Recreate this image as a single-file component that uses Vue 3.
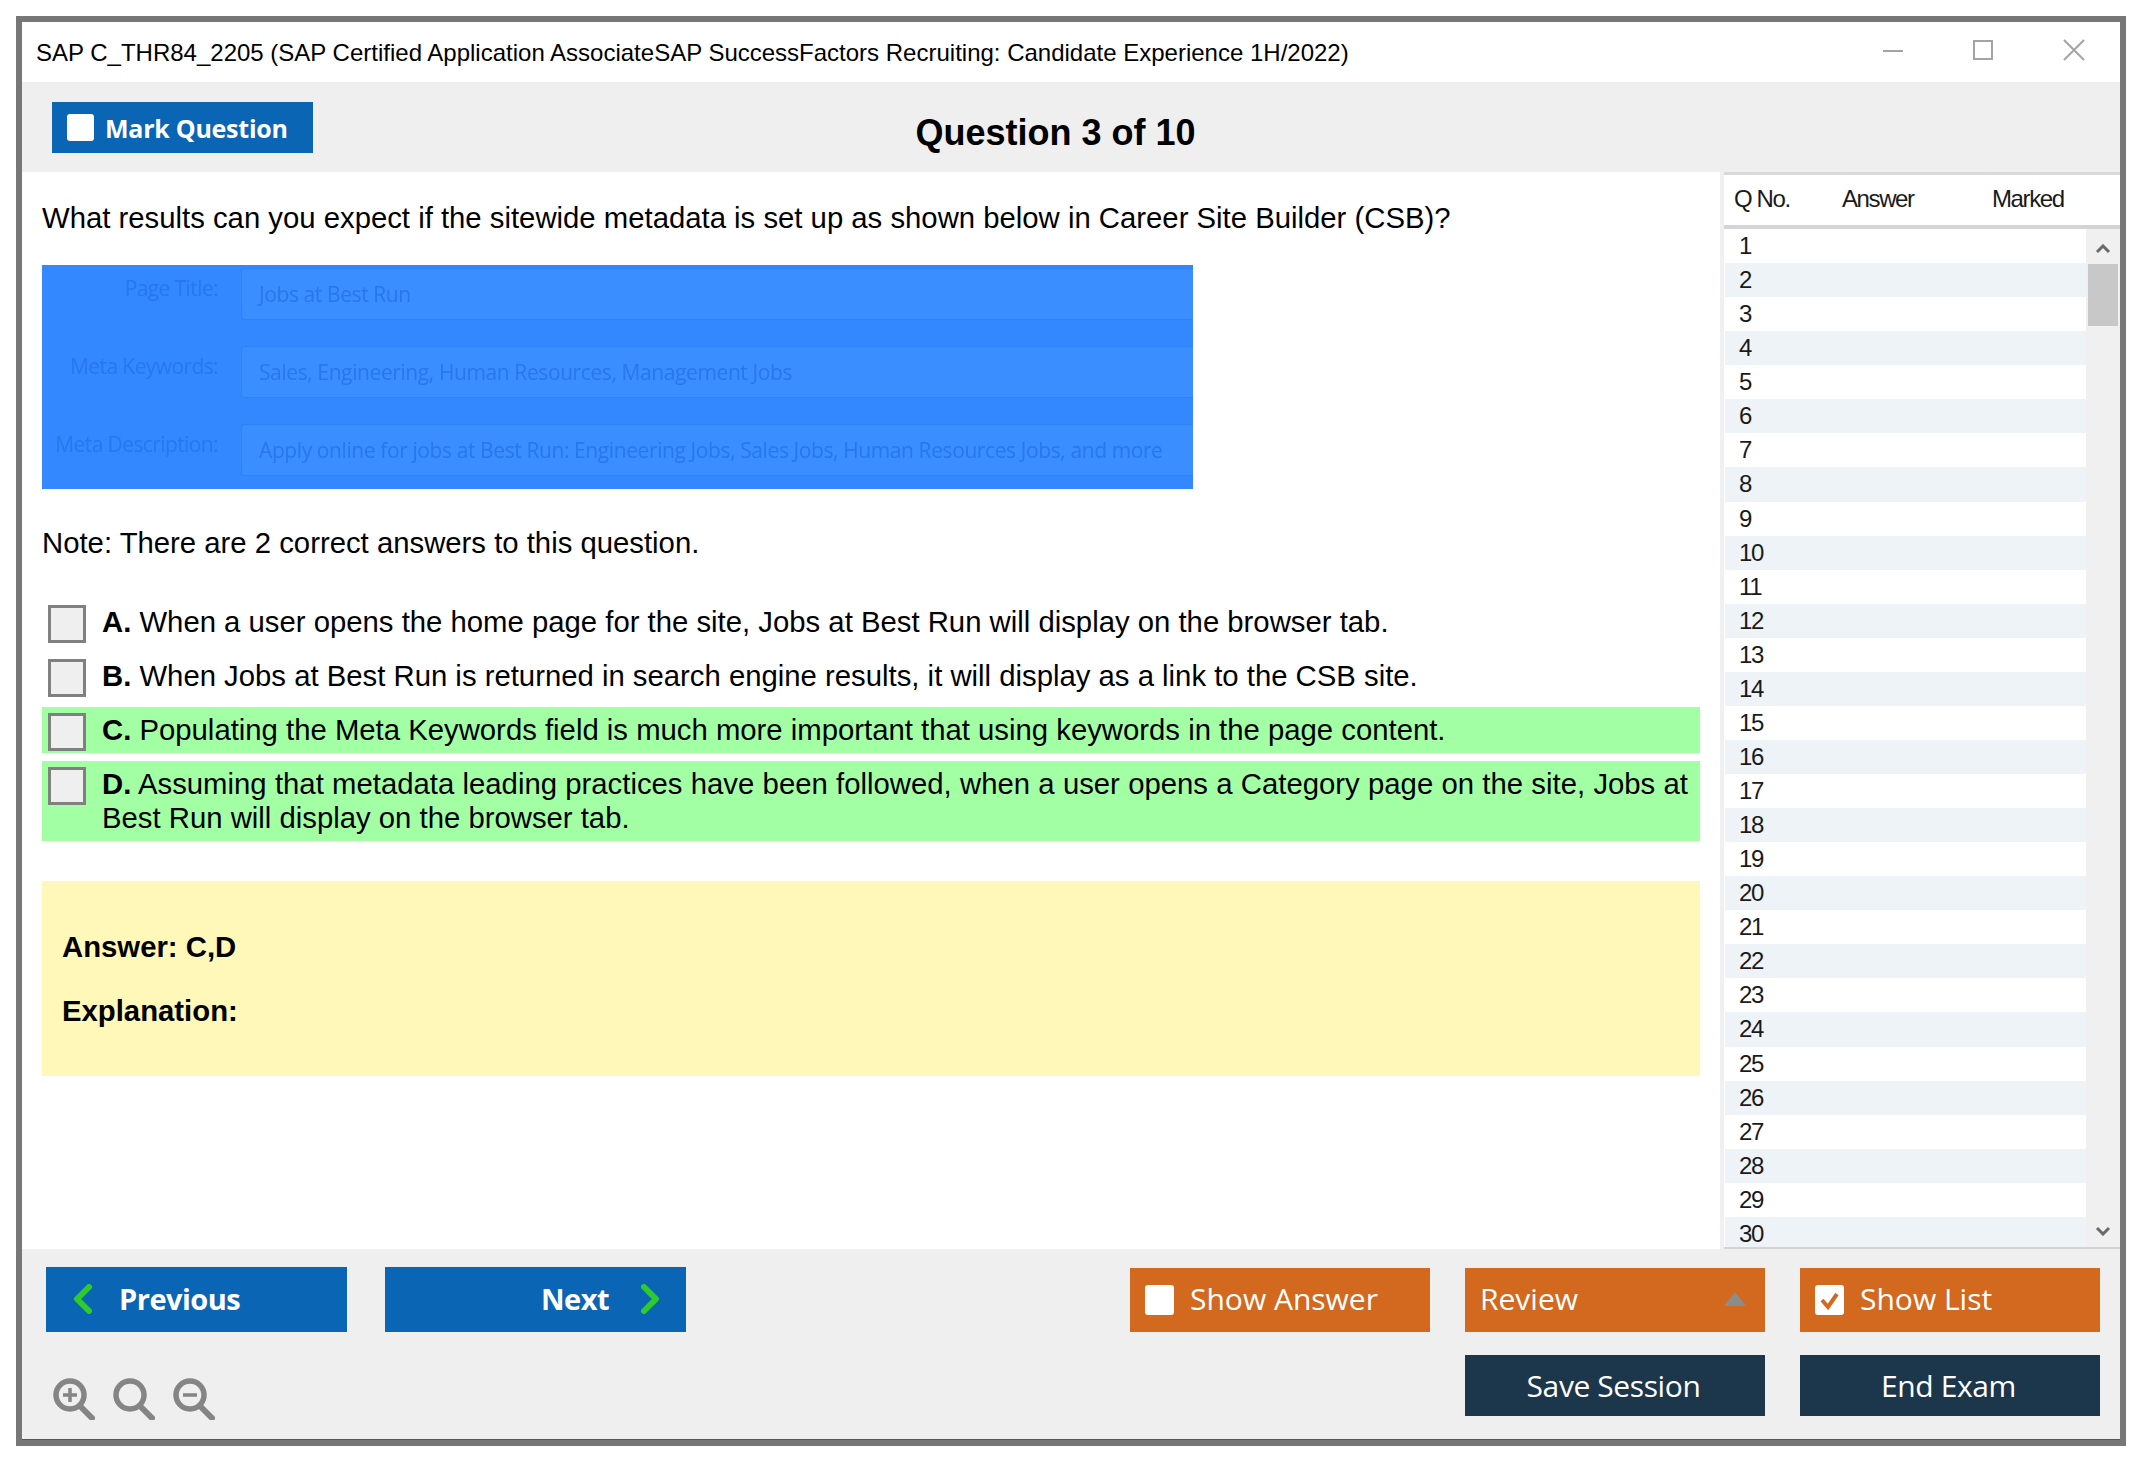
<script setup>
const rows = Array.from({ length: 30 }, (_, i) => i + 1)
const options = [
  { key: 'A.', text: 'When a user opens the home page for the site, Jobs at Best Run will display on the browser tab.' },
  { key: 'B.', text: 'When Jobs at Best Run is returned in search engine results, it will display as a link to the CSB site.' },
  { key: 'C.', text: 'Populating the Meta Keywords field is much more important that using keywords in the page content.', ok: true },
  { key: 'D.', text: 'Assuming that metadata leading practices have been followed, when a user opens a Category page on the site, Jobs at', tail: 'Best Run will display on the browser tab.', ok: true },
]
const meta = [
  { label: 'Page Title:', value: 'Jobs at Best Run' },
  { label: 'Meta Keywords:', value: 'Sales, Engineering, Human Resources, Management Jobs' },
  { label: 'Meta Description:', value: 'Apply online for jobs at Best Run: Engineering Jobs, Sales Jobs, Human Resources Jobs, and more' },
]
</script>

<template>
  <div class="page">
    <div class="window">
      <header class="titlebar">
        <span class="title">SAP C_THR84_2205 (SAP Certified Application AssociateSAP SuccessFactors Recruiting: Candidate Experience 1H/2022)</span>
        <div class="controls">
          <svg width="20" height="20" viewBox="0 0 20 20"><path d="M0 11h20" stroke="#a3a3a3" stroke-width="2" /></svg>
          <svg width="20" height="20" viewBox="0 0 20 20"><rect x="1" y="1" width="18" height="18" fill="none" stroke="#a3a3a3" stroke-width="2" /></svg>
          <svg width="22" height="22" viewBox="0 0 22 22"><path d="M1 1l20 20M21 1L1 21" stroke="#a3a3a3" stroke-width="2" /></svg>
        </div>
      </header>

      <div class="toolbar">
        <button class="btn mark"><span class="box"></span>Mark Question</button>
        <h1 class="heading">Question 3 of 10</h1>
      </div>

      <div class="middle">
        <main class="content">
          <p class="question">What results can you expect if the sitewide metadata is set up as shown below in Career Site Builder (CSB)?</p>
          <div class="meta">
            <div v-for="m in meta" :key="m.label" class="meta-row">
              <span class="meta-label">{{ m.label }}</span>
              <span class="meta-field"><span class="meta-value">{{ m.value }}</span></span>
            </div>
          </div>
          <p class="note">Note: There are 2 correct answers to this question.</p>
          <div class="options">
            <div v-for="o in options" :key="o.key" class="option" :class="{ ok: o.ok }">
              <span class="check"></span>
              <p class="option-text" :class="{ tight: o.tail }"><b>{{ o.key }}</b> {{ o.text }} <span v-if="o.tail" class="tail">{{ o.tail }}</span></p>
            </div>
          </div>
          <section class="answer">
            <p>Answer: C,D</p>
            <p>Explanation:</p>
          </section>
        </main>

        <aside class="panel">
          <div class="panel-head">
            <span class="h-no">Q No.</span>
            <span class="h-answer">Answer</span>
            <span class="h-marked">Marked</span>
          </div>
          <div class="panel-body">
            <div class="list">
              <div v-for="n in rows" :key="n" class="row">{{ n }}</div>
            </div>
            <div class="scroll">
              <svg class="arrow" width="16" height="10" viewBox="0 0 16 10"><path d="M2 8l6-6 6 6" fill="none" stroke="#6a6a6a" stroke-width="3" /></svg>
              <div class="thumb"></div>
              <svg class="arrow down" width="16" height="10" viewBox="0 0 16 10"><path d="M2 2l6 6 6-6" fill="none" stroke="#6a6a6a" stroke-width="3" /></svg>
            </div>
          </div>
        </aside>
      </div>

      <footer class="footer">
        <div class="foot-left">
          <div class="nav">
            <button class="btn blue prev">
              <svg width="19" height="30" viewBox="0 0 19 30"><path d="M16 3L4 15l12 12" fill="none" stroke="#2fcb2a" stroke-width="6" stroke-linecap="round" stroke-linejoin="round" /></svg>
              Previous
            </button>
            <button class="btn blue next">
              Next
              <svg width="19" height="30" viewBox="0 0 19 30"><path d="M3 3l12 12L3 27" fill="none" stroke="#2fcb2a" stroke-width="6" stroke-linecap="round" stroke-linejoin="round" /></svg>
            </button>
          </div>
          <div class="zooms">
            <svg width="42" height="42" viewBox="0 0 42 42"><circle cx="17" cy="17" r="14" fill="none" stroke="#858585" stroke-width="5.5" /><path d="M27 28l12 12" stroke="#858585" stroke-width="6" stroke-linecap="round" /><path d="M10 17h14M17 10v14" stroke="#858585" stroke-width="3.5" /></svg>
            <svg width="42" height="42" viewBox="0 0 42 42"><circle cx="17" cy="17" r="14" fill="none" stroke="#858585" stroke-width="5.5" /><path d="M27 28l12 12" stroke="#858585" stroke-width="6" stroke-linecap="round" /></svg>
            <svg width="42" height="42" viewBox="0 0 42 42"><circle cx="17" cy="17" r="14" fill="none" stroke="#858585" stroke-width="5.5" /><path d="M27 28l12 12" stroke="#858585" stroke-width="6" stroke-linecap="round" /><path d="M10 17h14" stroke="#858585" stroke-width="3.5" /></svg>
          </div>
        </div>
        <div class="foot-right">
          <div class="actions">
            <button class="btn orange"><span class="box small"></span>Show Answer</button>
            <button class="btn orange review">Review<span class="tri"></span></button>
            <button class="btn orange">
              <span class="box small">
                <svg width="21" height="19" viewBox="0 0 21 19"><path d="M3 9l6 7L18 3" fill="none" stroke="#d2691e" stroke-width="4" /></svg>
              </span>Show List
            </button>
          </div>
          <div class="actions second">
            <button class="btn navy">Save Session</button>
            <button class="btn navy">End Exam</button>
          </div>
        </div>
      </footer>
    </div>
  </div>
</template>

<style>
html, body { margin: 0; background: #fff; }
</style>

<style scoped>
.page { padding: 16px 0 0 16px; width: 2134px; height: 1454px; background: #fff; }
.window {
  width: 2110px; height: 1430px; box-sizing: border-box;
  border: 6px solid #777; background: #fff;
  display: flex; flex-direction: column; overflow: hidden;
  font-family: "Liberation Sans", Arial, sans-serif; color: #000;
}
.titlebar { height: 60px; flex: none; display: flex; align-items: center; padding: 2px 35px 0 14px; box-sizing: border-box; }
.title { font-size: 24px; white-space: nowrap; }
.controls { margin-left: auto; display: flex; align-items: center; gap: 70px; margin-top: -6px; }
.toolbar { height: 90px; flex: none; background: #efefef; display: flex; padding: 20px 0 0 30px; box-sizing: border-box; }
.btn { border: 0; padding: 0; display: flex; align-items: center; color: #fff; font-family: "Open Sans", sans-serif; }
.mark { width: 261px; height: 51px; background: #0a66b5; font-size: 25px; font-weight: 700; letter-spacing: -0.25px; padding-left: 15px; box-sizing: border-box; }
.box { width: 27px; height: 27px; background: #fff; border-radius: 3px; margin-right: 11px; flex: none; display: flex; align-items: center; justify-content: center; }
.box.small { width: 29px; height: 30px; margin-right: 16px; margin-top: 4px; }
.heading { flex: 1; margin: 0; padding: 11px 322px 0 0; font-size: 36px; font-weight: 700; text-align: center; line-height: 40px; }
.middle { flex: none; height: 1077px; display: flex; }
.content { width: 1702px; flex: none; box-sizing: border-box; padding: 0 20px; border-right: 4px solid #f0f0f0; overflow: hidden; }
.question { margin: 29px 0 0; font-size: 29.3px; line-height: 34px; white-space: nowrap; }
.meta { margin-top: 30px; width: 1151px; height: 224px; background: #3388ff; box-sizing: border-box; padding-top: 3px; display: flex; flex-direction: column; gap: 26px; overflow: hidden; }
.meta-row { display: flex; align-items: center; height: 52px; flex: none; }
.meta-label { width: 176px; flex: none; text-align: right; font: 21px "Open Sans", sans-serif; letter-spacing: -0.6px; color: #2877ec; filter: blur(0.7px); padding-bottom: 12px; white-space: nowrap; }
.meta-field { flex: 1; height: 100%; margin-left: 23px; padding-left: 17px; background: #3a8eff; box-sizing: border-box; border: 1px solid #2f83f8; border-right: 0; border-radius: 3px 0 0 3px; display: flex; align-items: center; }
.meta-value { font: 21px "Open Sans", sans-serif; letter-spacing: -0.4px; color: #2877ec; filter: blur(0.7px); white-space: nowrap; }
.note { margin: 37px 0 0; font-size: 29.3px; line-height: 34px; }
.options { margin-top: 39px; display: flex; flex-direction: column; gap: 8px; }
.option { display: flex; box-sizing: border-box; padding: 6px 12px 0 6px; }
.option.ok { background: #a3ffa3; }
.check { width: 38px; height: 38px; flex: none; box-sizing: border-box; border: 3px solid #808080; background: #efefef; }
.option-text { margin: 0 0 6px 16px; font-size: 29.3px; line-height: 34px; text-align: justify; }
.option-text.tight { word-spacing: -1.2px; }
.tail { word-spacing: 0; }
.answer { margin-top: 40px; height: 195px; background: #fff8b8; box-sizing: border-box; padding: 49px 20px 0; font-size: 29.3px; font-weight: 700; line-height: 34px; }
.answer p { margin: 0 0 30px; }
.panel { width: 396px; flex: none; display: flex; flex-direction: column; border-top: 3px solid #d9d9d9; box-sizing: border-box; }
.panel-head { flex: none; border-bottom: 4px solid #d4d4d4; padding-bottom: 2px; box-sizing: border-box; height: 54px; font-size: 24px; letter-spacing: -1.4px; color: #1a1a1a; display: flex; align-items: center; }
.h-no { margin-left: 10px; width: 108px; }
.h-answer { width: 150px; }
.panel-body { flex: 1; min-height: 0; display: flex; overflow: hidden; border-bottom: 2px solid #d4d4d4; }
.list { width: 362px; flex: none; padding-left: 1px; box-sizing: border-box; }
.row { height: 34.07px; box-sizing: border-box; padding-left: 14px; font-size: 24px; letter-spacing: -1.3px; line-height: 34px; color: #1a1a1a; }
.row:nth-child(even) { background: #eef3f8; }
.scroll { flex: 1; background: #f0f0f0; position: relative; display: flex; flex-direction: column; align-items: center; }
.thumb { position: absolute; top: 35px; left: 2px; width: 30px; height: 62px; background: #c8c8c8; }
.arrow { position: absolute; top: 15px; left: 9px; }
.arrow.down { top: auto; bottom: 11px; }
.footer { flex: 1; min-height: 0; background: #efefef; display: flex; justify-content: space-between; padding: 18px 20px 0 24px; border-bottom: 1px solid #555; }
.foot-left { display: flex; flex-direction: column; }
.nav { display: flex; gap: 38px; }
.blue { width: 301px; height: 65px; background: #0a66b5; font-size: 29px; font-weight: 700; letter-spacing: -0.5px; box-sizing: border-box; padding-bottom: 2px; }
.prev { padding-left: 27px; gap: 27px; }
.next { justify-content: flex-end; padding-right: 26px; gap: 32px; }
.zooms { display: flex; gap: 18px; margin: 46px 0 0 7px; }
.foot-right { display: flex; flex-direction: column; gap: 23px; align-items: flex-end; padding-top: 1px; }
.actions { display: flex; gap: 35px; }
.orange { width: 300px; height: 64px; background: #d2691e; font-size: 30px; padding: 0 0 4px 15px; box-sizing: border-box; }
.review { position: relative; }
.tri { position: absolute; right: 19px; top: 24px; border-left: 11px solid transparent; border-right: 11px solid transparent; border-bottom: 14px solid #8c8c8c; }
.navy { width: 300px; height: 61px; background: #1c364b; font-size: 30px; justify-content: center; letter-spacing: -0.4px; padding-right: 3px; box-sizing: border-box; }
</style>
